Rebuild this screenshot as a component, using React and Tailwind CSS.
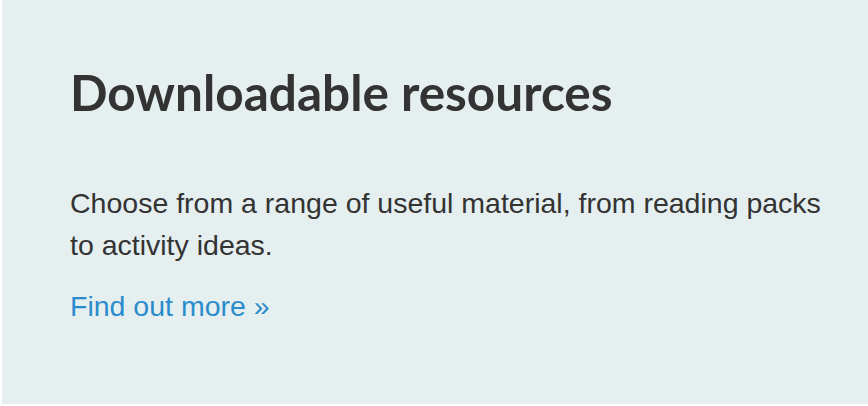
const App = () => {
    return (
        <div className="w-[868px] h-[406px] bg-white pl-[2px] pb-[2px]">
            <div className="h-full bg-[#e5eff0] pl-[68px] pr-[30px] pt-[62px] flex flex-col items-start">
                <h2 className="text-[49.5px] leading-[60px] font-bold text-[#333333] font-[family-name:Lato,sans-serif]">Downloadable resources</h2>
                <p className="mt-[60px] text-[28.5px] leading-[42px] text-[#333333] font-[family-name:'Liberation_Sans',Arial,sans-serif]">
                    Choose from a range of useful material, from reading packs to activity ideas.
                </p>
                <a href="#" className="mt-[19px] text-[28.5px] leading-[42px] text-[#2b8ccc] font-[family-name:'Liberation_Sans',Arial,sans-serif]">Find out more »</a>
            </div>
        </div>
    )
}

export default App;
